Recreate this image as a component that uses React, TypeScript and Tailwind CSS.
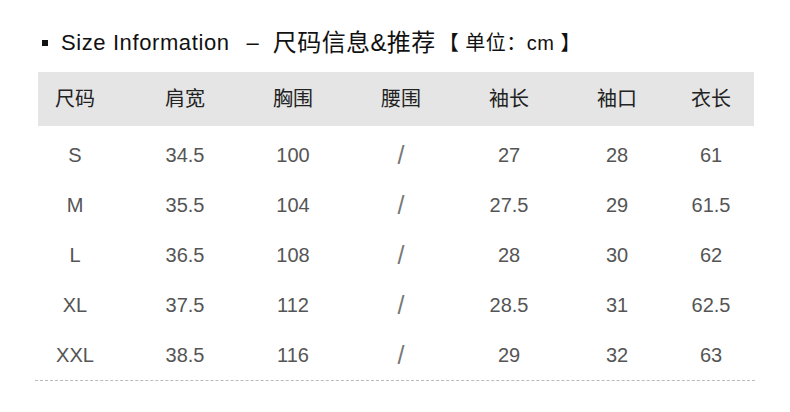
import React from "react";

const headers = ["尺码", "肩宽", "胸围", "腰围", "袖长", "袖口", "衣长"];
const rows = [
  ["S", "34.5", "100", "/", "27", "28", "61"],
  ["M", "35.5", "104", "/", "27.5", "29", "61.5"],
  ["L", "36.5", "108", "/", "28", "30", "62"],
  ["XL", "37.5", "112", "/", "28.5", "31", "62.5"],
  ["XXL", "38.5", "116", "/", "29", "32", "63"],
];

const font = { fontFamily: '"Liberation Sans", "Noto Sans CJK SC", sans-serif' };

function Row({ cells, header }: { cells: string[]; header?: boolean }) {
  return (
    <div
      className={
        "grid grid-cols-[93px_108px_108px_108px_108px_108px_1fr] items-center " +
        (header ? "h-[54px] bg-[#e5e5e5] text-[#222] text-[20px]" : "h-[50px] text-[#555] text-[20px]")
      }
    >
      {cells.map((c, i) => (
        <div
          key={i}
          className={
            "text-center " +
            (i === 0 ? "pr-[19px]" : "") +
            (i === 6 ? " pr-[3px]" : "") +
            (c === "/" ? " text-[25px] leading-none text-[#777]" : "")
          }
        >
          {c}
        </div>
      ))}
    </div>
  );
}

export default function App() {
  return (
    <div className="w-[790px] h-[412px] bg-white overflow-hidden" style={font}>
      <div className="flex items-center h-[28px] mt-[29px] ml-[42px] whitespace-nowrap">
        <div className="w-[6px] h-[6px] bg-[#111] mr-[13px]" />
        <span className="text-[22px] tracking-[0.6px] text-[#111] leading-none">Size Information</span>
        <span className="text-[22px] text-[#111] leading-none ml-[17px]">–</span>
        <span className="text-[24px] tracking-[0.4px] text-[#111] leading-none ml-[14px]">尺码信息&amp;推荐</span>
        <span className="text-[20px] text-[#111] leading-none ml-[3px] tracking-[0.5px]">【 单位：cm 】</span>
      </div>
      <div className="ml-[38px] w-[716px] mt-[15px]">
        <Row cells={headers} header />
        <div className="mt-[4px]">
          {rows.map((r, i) => (
            <Row key={i} cells={r} />
          ))}
        </div>
        <div className="border-t border-dashed border-[#bbb] -ml-[3px] w-[720px]" />
      </div>
    </div>
  );
}
